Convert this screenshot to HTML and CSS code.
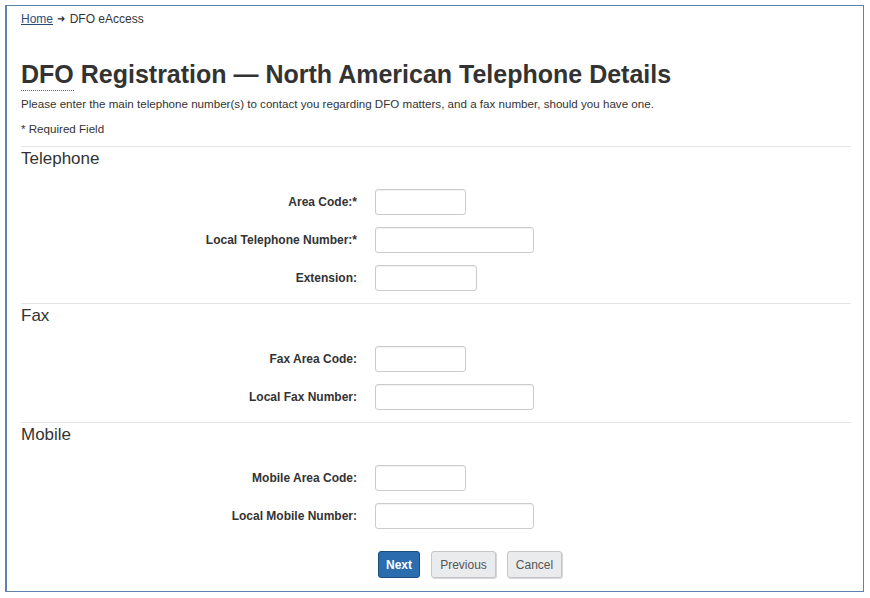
FILE: index.html
```html
<!DOCTYPE html>
<html lang="en">
<head>
<meta charset="utf-8">
<title>DFO Registration — North American Telephone Details</title>
<link rel="stylesheet" href="styles.css">
</head>
<body>
<div class="frame">
  <nav class="crumbs"><a href="#" class="crumb-link">Home</a> <span class="arrow">&#10140;</span> DFO eAccess</nav>
  <h1 class="title"><abbr class="abbr" title="Fisheries and Oceans Canada">DFO</abbr> Registration — North American Telephone Details</h1>
  <p class="intro">Please enter the main telephone number(s) to contact you regarding DFO matters, and a fax number, should you have one.</p>
  <p class="req">* Required Field</p>

  <section class="section">
    <h2 class="sec-title">Telephone</h2>
    <div class="rows">
      <div class="row"><label class="lbl">Area Code:*</label><input class="inp w90" type="text"></div>
      <div class="row"><label class="lbl">Local Telephone Number:*</label><input class="inp w158" type="text"></div>
      <div class="row"><label class="lbl">Extension:</label><input class="inp w101" type="text"></div>
    </div>
  </section>

  <section class="section">
    <h2 class="sec-title">Fax</h2>
    <div class="rows">
      <div class="row"><label class="lbl">Fax Area Code:</label><input class="inp w90" type="text"></div>
      <div class="row"><label class="lbl">Local Fax Number:</label><input class="inp w158" type="text"></div>
    </div>
  </section>

  <section class="section last">
    <h2 class="sec-title">Mobile</h2>
    <div class="rows">
      <div class="row"><label class="lbl">Mobile Area Code:</label><input class="inp w90" type="text"></div>
      <div class="row"><label class="lbl">Local Mobile Number:</label><input class="inp w158" type="text"></div>
    </div>
  </section>

  <div class="actions">
    <button class="btn btn-primary" type="button">Next</button>
    <button class="btn btn-default" type="button">Previous</button>
    <button class="btn btn-default" type="button">Cancel</button>
  </div>
</div>
</body>
</html>
```
FILE: styles.css
```css
html, body {
  margin: 0;
  padding: 0;
  background: #fff;
}
body {
  font-family: "Liberation Sans", Arial, sans-serif;
  color: #333;
}
.frame {
  box-sizing: border-box;
  margin: 5px 0 0 5px;
  width: 859px;
  height: 587px;
  border: 1px solid #5f82a8;
  border-left: 2px solid #5f82a8;
  padding: 5px 12px 0 14px;
}
.crumbs {
  font-size: 12px;
  line-height: 17px;
  color: #333;
}
.crumb-link {
  color: #284e78;
  text-decoration: underline;
}
.arrow {
  font-size: 10px;
  color: #333;
  margin: 0 1px;
  position: relative;
  top: -1px;
}
.title {
  margin: 33px 0 0;
  font-size: 25px;
  line-height: 27px;
  font-weight: bold;
  color: #333;
}
.abbr {
  text-decoration: none;
  border-bottom: 1px dotted #666;
  padding-bottom: 2px;
}
.intro {
  margin: 7px 0 0;
  font-size: 11.6px;
  line-height: 17px;
}
.req {
  margin: 8px 0 0;
  font-size: 11.6px;
  line-height: 17px;
}
.section {
  margin-top: 9px;
  border-top: 1px solid #e3e3e3;
}
.sec-title {
  margin: 0;
  font-size: 17px;
  line-height: 24px;
  font-weight: normal;
  color: #333;
}
.rows {
  display: flex;
  flex-direction: column;
  gap: 12px;
  padding: 18px 0 12px;
}
.section + .section {
  margin-top: 0;
}
.section.last .rows {
  padding-bottom: 0;
}
.row {
  display: flex;
  align-items: center;
}
.lbl {
  width: 336px;
  text-align: right;
  font-size: 12px;
  font-weight: bold;
  color: #333;
  margin-right: 18px;
}
.inp {
  box-sizing: border-box;
  height: 26px;
  border: 1px solid #ccc;
  border-radius: 3px;
  box-shadow: inset 0 1px 1px rgba(0,0,0,0.06);
  background: #fff;
  padding: 0 6px;
  font: 12px "Liberation Sans", Arial, sans-serif;
}
.w90 { width: 91px; }
.w158 { width: 159px; }
.w101 { width: 102px; }
.actions {
  display: flex;
  gap: 11px;
  margin-top: 22px;
  padding-left: 357px;
}
.btn {
  box-sizing: border-box;
  height: 27px;
  border-radius: 3px;
  font: 12px "Liberation Sans", Arial, sans-serif;
  padding: 0 9px;
  cursor: pointer;
}
.btn-primary {
  background: #2a6cae;
  border: 1px solid #1c4c7c;
  color: #fff;
  font-weight: bold;
  width: 42px;
  padding: 0;
}
.btn-default {
  background: #eaebed;
  border: 1px solid #c4c6c9;
  color: #555;
  box-shadow: 1px 1px 0 #d7d7d7;
}
.btn-default:nth-child(2) { width: 65px; padding: 0; }
.btn-default:nth-child(3) { width: 55px; padding: 0; }
```
